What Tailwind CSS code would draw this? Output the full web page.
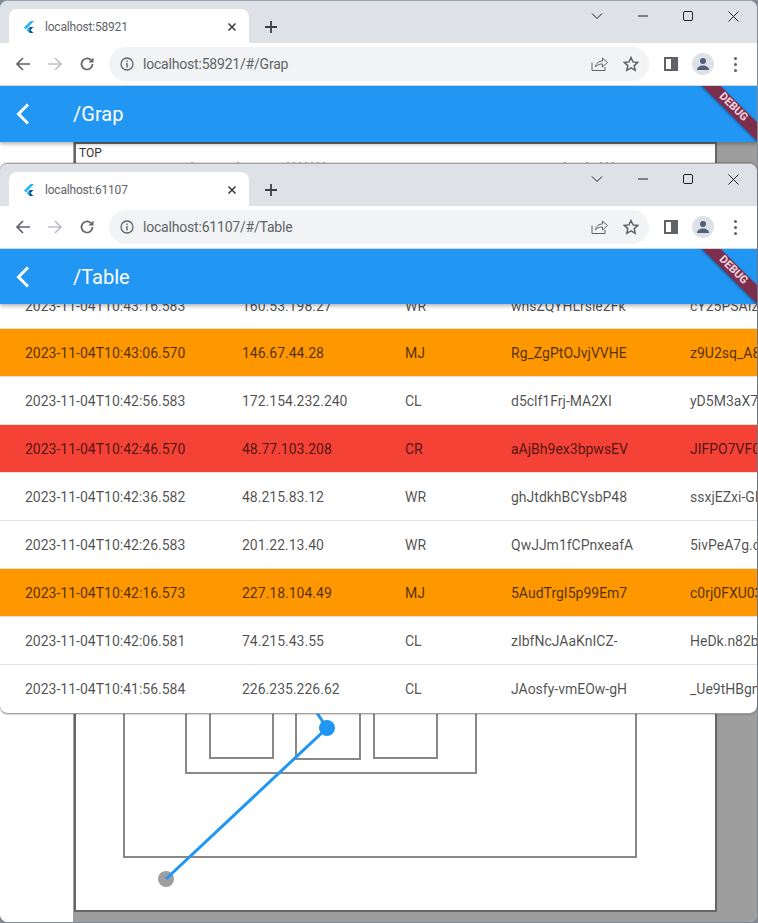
<!DOCTYPE html>
<html lang="en">
<head>
  <meta charset="UTF-8" />
  <title>/Grap</title>
  <script src="https://cdn.jsdelivr.net/npm/@tailwindcss/browser@4"></script>
</head>
<body class="w-[758px] h-[923px] overflow-hidden relative bg-[#7f8a93] font-['Roboto',sans-serif]">

  <!-- Back window -->
  <div class="absolute left-0 top-0 w-[757px] h-[922px] flex flex-col bg-white rounded-lg overflow-hidden border-t border-[#9aa8b4]">
    <div class="h-[42px] bg-[#dee1e6] flex items-end pl-[9px] relative shrink-0">
      <div class="w-[240px] h-[34px] bg-white rounded-t-lg flex items-center pl-[12px] pr-[12px] pt-px gap-[8px]">
        <svg width="16" height="16" viewBox="0 0 16 16"><path d="M9.5 2 3 8.5l2 2L13 2z" fill="#29b6f6"/><path d="M9 8l-3 3 3 3h3.5l-3-3 3-3z" fill="#01579b"/><path d="M6 11l1.500-1.500 1.500 1.500-1.500 1.500z" fill="#29b6f6"/></svg>
        <span class="text-[12px] tracking-[-0.2px] text-[#5f6368] flex-1">localhost:58921</span>
        <svg width="10" height="10" viewBox="0 0 10 10"><path d="M1.500 1.500l7 7M8.500 1.500l-7 7" stroke="#3c4043" stroke-width="1.600"/></svg>
      </div>
      <svg class="ml-[15px] mb-[9px]" width="14" height="14" viewBox="0 0 14 14"><path d="M7 1v12M1 7h12" stroke="#3c4043" stroke-width="1.800"/></svg>
      <div class="absolute right-0 top-0 flex h-[30px] items-center">
        <svg class="mr-[35px]" width="12" height="8" viewBox="0 0 12 8"><path d="M1 1.500l5 5 5-5" fill="none" stroke="#202124" stroke-width="1"/></svg>
        <svg class="mr-[35px]" width="10" height="2" viewBox="0 0 10 2"><path d="M0 1h10" stroke="#202124" stroke-width="1"/></svg>
        <div class="mr-[35px] w-[10px] h-[10px] border border-[#202124] rounded-[2px]"></div>
        <svg class="mr-[18px]" width="11" height="11" viewBox="0 0 11 11"><path d="M.5.500l10 10M10.500.500l-10 10" stroke="#202124" stroke-width="1"/></svg>
      </div>
    </div>
    <div class="h-[43px] bg-white flex items-center pl-[15px] shrink-0 border-b border-[#dadce0]">
      <svg width="16" height="16" viewBox="0 0 16 16"><path d="M15 8H2M8 2 2 8l6 6" fill="none" stroke="#5f6368" stroke-width="1.700"/></svg>
      <svg class="ml-[16px]" width="16" height="16" viewBox="0 0 16 16"><path d="M1 8h13M8 2l6 6-6 6" fill="none" stroke="#bdc1c6" stroke-width="1.700"/></svg>
      <svg class="ml-[16px]" width="16" height="16" viewBox="0 0 16 16"><path d="M13.500 8a5.500 5.500 0 1 1-1.600-3.900" fill="none" stroke="#5f6368" stroke-width="1.700"/><path d="M14.500 1.500v5h-5z" fill="#5f6368"/></svg>
      <div class="ml-[14px] w-[540px] h-[34px] rounded-full bg-[#f1f3f4] flex items-center pl-[11px] relative">
        <svg width="14" height="14" viewBox="0 0 14 14"><circle cx="7" cy="7" r="6" fill="none" stroke="#5f6368" stroke-width="1.300"/><path d="M7 6v4.500M7 3.500v1.500" stroke="#5f6368" stroke-width="1.400"/></svg>
        <span class="ml-[9px] text-[14px] tracking-[-0.2px] text-[#5f6368]">localhost:58921/#/Grap</span>
        <svg class="absolute left-[482px] top-[9px]" width="17" height="16" viewBox="0 0 17 16"><path d="M1 6.500v8h13v-3.500" fill="none" stroke="#5f6368" stroke-width="1"/><path d="M4.500 11c.5-4 3.500-6 7-6V2l5 4.500-5 4.500V8c-3 0-5.500.8-7 3z" fill="none" stroke="#5f6368" stroke-width="1"/></svg>
        <svg class="absolute left-[514px] top-[9px]" width="16" height="16" viewBox="0 0 16 16"><path d="M8 1.500l2 4.400 4.700.5-3.500 3.200 1 4.700L8 11.900l-4.200 2.400 1-4.700L1.300 6.400 6 5.900z" fill="none" stroke="#5f6368" stroke-width="1.500"/></svg>
      </div>
      <div class="ml-[15px] w-[14px] h-[14px] border-2 border-[#5f6368] border-r-[7px]"></div>
      <div class="ml-[14px] w-[22px] h-[22px] rounded-full bg-[#dee1e6] flex items-center justify-center">
        <svg width="14" height="14" viewBox="0 0 14 14"><circle cx="7" cy="4" r="3" fill="#50607a"/><path d="M1 13c0-3 3-4.500 6-4.500s6 1.500 6 4.500z" fill="#50607a"/></svg>
      </div>
      <div class="ml-[20px] flex flex-col gap-[3px]">
        <div class="w-[3px] h-[3px] rounded-full bg-[#5f6368]"></div>
        <div class="w-[3px] h-[3px] rounded-full bg-[#5f6368]"></div>
        <div class="w-[3px] h-[3px] rounded-full bg-[#5f6368]"></div>
      </div>
    </div>
    <div class="h-[56px] bg-[#2196f3] flex items-center pl-[15px] shrink-0 relative overflow-hidden shadow-[0_2px_4px_rgba(0,0,0,0.3)] z-10">
      <svg width="14" height="22" viewBox="0 0 14 22"><path d="M13 1.500 3.500 11l9.500 9.500" fill="none" stroke="white" stroke-width="3"/></svg>
      <span class="ml-[44px] text-[20px] text-white">/Grap</span>
      <div class="absolute right-[-41px] top-[15px] w-[130px] h-[13px] bg-[#7e2e4d] rotate-45 flex items-center justify-center text-[11px] font-bold text-[#f3dbe3] shadow-[0_1px_3px_rgba(0,0,0,0.4)]">DEBUG</div>
    </div>
    <!-- Graph canvas -->
    <div class="flex-1 flex relative">
      <div class="w-[73px] bg-white"></div>
      <div class="flex-1 bg-[#9e9e9e] pr-[40px] pb-[10px]">
        <div class="h-full bg-white border-2 border-[#666] ml-px relative">
          <div class="text-[12px] leading-[14px] pl-[3px] pt-[2px] text-[#333]">TOP</div>
          <div class="absolute left-[47px] top-[560px] w-[514px] h-[154px] border-2 border-[#888] border-t-0"></div>
          <div class="absolute left-[109px] top-[560px] w-[292px] h-[70px] border-2 border-[#888] border-t-0"></div>
          <div class="absolute left-[133px] top-[560px] w-[65px] h-[55px] border-2 border-[#888] border-t-0"></div>
          <div class="absolute left-[219px] top-[560px] w-[66px] h-[56px] border-2 border-[#888] border-t-0"></div>
          <div class="absolute left-[297px] top-[560px] w-[65px] h-[55px] border-2 border-[#888] border-t-0"></div>
          <svg class="absolute left-0 top-0" width="640" height="767" viewBox="0 0 640 767">
            <path d="M116 18v1M162 18v1M212 18v1M218 18v1M224 18v1M230 18v1M236 18v1M242 18v1M248 18v1M489 18v1M511 18v1M525 18v1M531 18v1M537 18v1M-21 569v1M11 569v1M46 569v1M55 569v1M62 569v1M162 569v1M187 569v1M202 569v1M208 569v1M214 569v1M220 569v1M226 569v1M244 569v1M250 569v1M256 569v1M262 569v1" stroke="#777" stroke-width="1"/>
            <circle cx="90" cy="735" r="8" fill="#9e9e9e"/>
            <path d="M90 735 251 584 239 566" fill="none" stroke="#2196f3" stroke-width="3"/>
            <circle cx="251" cy="584" r="8" fill="#2196f3"/>
          </svg>
        </div>
      </div>
    </div>
  </div>

  <!-- Front window -->
  <div class="absolute left-0 top-[163px] w-[757px] h-[551px] flex flex-col bg-white rounded-lg overflow-hidden border-t border-b border-[#a0a0a0] shadow-[0_0_2px_rgba(0,0,0,0.5)]">
    <div class="h-[42px] bg-[#dee1e6] flex items-end pl-[9px] relative shrink-0">
      <div class="w-[240px] h-[34px] bg-white rounded-t-lg flex items-center pl-[12px] pr-[12px] pt-px gap-[8px]">
        <svg width="16" height="16" viewBox="0 0 16 16"><path d="M9.5 2 3 8.5l2 2L13 2z" fill="#29b6f6"/><path d="M9 8l-3 3 3 3h3.5l-3-3 3-3z" fill="#01579b"/><path d="M6 11l1.500-1.500 1.500 1.500-1.500 1.500z" fill="#29b6f6"/></svg>
        <span class="text-[12px] tracking-[-0.2px] text-[#5f6368] flex-1">localhost:61107</span>
        <svg width="10" height="10" viewBox="0 0 10 10"><path d="M1.500 1.500l7 7M8.500 1.500l-7 7" stroke="#3c4043" stroke-width="1.600"/></svg>
      </div>
      <svg class="ml-[15px] mb-[9px]" width="14" height="14" viewBox="0 0 14 14"><path d="M7 1v12M1 7h12" stroke="#3c4043" stroke-width="1.800"/></svg>
      <div class="absolute right-0 top-0 flex h-[30px] items-center">
        <svg class="mr-[35px]" width="12" height="8" viewBox="0 0 12 8"><path d="M1 1.500l5 5 5-5" fill="none" stroke="#202124" stroke-width="1"/></svg>
        <svg class="mr-[35px]" width="10" height="2" viewBox="0 0 10 2"><path d="M0 1h10" stroke="#202124" stroke-width="1"/></svg>
        <div class="mr-[35px] w-[10px] h-[10px] border border-[#202124] rounded-[2px]"></div>
        <svg class="mr-[18px]" width="11" height="11" viewBox="0 0 11 11"><path d="M.5.500l10 10M10.500.500l-10 10" stroke="#202124" stroke-width="1"/></svg>
      </div>
    </div>
    <div class="h-[43px] bg-white flex items-center pl-[15px] shrink-0 border-b border-[#dadce0]">
      <svg width="16" height="16" viewBox="0 0 16 16"><path d="M15 8H2M8 2 2 8l6 6" fill="none" stroke="#5f6368" stroke-width="1.700"/></svg>
      <svg class="ml-[16px]" width="16" height="16" viewBox="0 0 16 16"><path d="M1 8h13M8 2l6 6-6 6" fill="none" stroke="#bdc1c6" stroke-width="1.700"/></svg>
      <svg class="ml-[16px]" width="16" height="16" viewBox="0 0 16 16"><path d="M13.500 8a5.500 5.500 0 1 1-1.600-3.900" fill="none" stroke="#5f6368" stroke-width="1.700"/><path d="M14.500 1.500v5h-5z" fill="#5f6368"/></svg>
      <div class="ml-[14px] w-[540px] h-[34px] rounded-full bg-[#f1f3f4] flex items-center pl-[11px] relative">
        <svg width="14" height="14" viewBox="0 0 14 14"><circle cx="7" cy="7" r="6" fill="none" stroke="#5f6368" stroke-width="1.300"/><path d="M7 6v4.500M7 3.500v1.500" stroke="#5f6368" stroke-width="1.400"/></svg>
        <span class="ml-[9px] text-[14px] tracking-[-0.2px] text-[#5f6368]">localhost:61107/#/Table</span>
        <svg class="absolute left-[482px] top-[9px]" width="17" height="16" viewBox="0 0 17 16"><path d="M1 6.500v8h13v-3.500" fill="none" stroke="#5f6368" stroke-width="1"/><path d="M4.500 11c.5-4 3.500-6 7-6V2l5 4.500-5 4.500V8c-3 0-5.500.8-7 3z" fill="none" stroke="#5f6368" stroke-width="1"/></svg>
        <svg class="absolute left-[514px] top-[9px]" width="16" height="16" viewBox="0 0 16 16"><path d="M8 1.500l2 4.400 4.700.5-3.500 3.200 1 4.700L8 11.900l-4.200 2.400 1-4.700L1.300 6.400 6 5.900z" fill="none" stroke="#5f6368" stroke-width="1.500"/></svg>
      </div>
      <div class="ml-[15px] w-[14px] h-[14px] border-2 border-[#5f6368] border-r-[7px]"></div>
      <div class="ml-[14px] w-[22px] h-[22px] rounded-full bg-[#dee1e6] flex items-center justify-center">
        <svg width="14" height="14" viewBox="0 0 14 14"><circle cx="7" cy="4" r="3" fill="#50607a"/><path d="M1 13c0-3 3-4.500 6-4.500s6 1.500 6 4.500z" fill="#50607a"/></svg>
      </div>
      <div class="ml-[20px] flex flex-col gap-[3px]">
        <div class="w-[3px] h-[3px] rounded-full bg-[#5f6368]"></div>
        <div class="w-[3px] h-[3px] rounded-full bg-[#5f6368]"></div>
        <div class="w-[3px] h-[3px] rounded-full bg-[#5f6368]"></div>
      </div>
    </div>
    <div class="h-[55px] bg-[#2196f3] flex items-center pl-[15px] shrink-0 relative overflow-hidden shadow-[0_2px_4px_rgba(0,0,0,0.3)] z-10">
      <svg width="14" height="22" viewBox="0 0 14 22"><path d="M13 1.500 3.500 11l9.500 9.500" fill="none" stroke="white" stroke-width="3"/></svg>
      <span class="ml-[44px] text-[20px] text-white">/Table</span>
      <div class="absolute right-[-41px] top-[15px] w-[130px] h-[13px] bg-[#7e2e4d] rotate-45 flex items-center justify-center text-[11px] font-bold text-[#f3dbe3] shadow-[0_1px_3px_rgba(0,0,0,0.4)]">DEBUG</div>
    </div>
    <!-- Table rows -->
    <div class="flex-1 overflow-hidden text-[14px] text-black/70 whitespace-nowrap">
      <div class="h-[24px] flex items-end overflow-hidden"><div class="flex h-[44px] items-center w-full shrink-0">
        <span class="w-[242px] pl-[25px] shrink-0">2023-11-04T10:43:16.583</span><span class="w-[163px] shrink-0">160.53.198.27</span><span class="w-[106px] shrink-0">WR</span><span class="w-[179px] shrink-0">whsZQYHLrsle2Fk</span><span>cY25PSAIz</span>
      </div></div>
      <div class="h-[48px] flex items-center pt-px bg-[#ff9800] border-t border-[#e0e0e0]"><span class="w-[242px] pl-[25px] shrink-0">2023-11-04T10:43:06.570</span><span class="w-[163px] shrink-0">146.67.44.28</span><span class="w-[106px] shrink-0">MJ</span><span class="w-[179px] shrink-0">Rg_ZgPtOJvjVVHE</span><span>z9U2sq_A8</span></div>
      <div class="h-[48px] flex items-center pt-px border-t border-[#e0e0e0]"><span class="w-[242px] pl-[25px] shrink-0">2023-11-04T10:42:56.583</span><span class="w-[163px] shrink-0">172.154.232.240</span><span class="w-[106px] shrink-0">CL</span><span class="w-[179px] shrink-0">d5clf1Frj-MA2XI</span><span>yD5M3aX7</span></div>
      <div class="h-[48px] flex items-center pt-px bg-[#f44336] border-t border-[#e0e0e0]"><span class="w-[242px] pl-[25px] shrink-0">2023-11-04T10:42:46.570</span><span class="w-[163px] shrink-0">48.77.103.208</span><span class="w-[106px] shrink-0">CR</span><span class="w-[179px] shrink-0">aAjBh9ex3bpwsEV</span><span>JIFPO7VF0</span></div>
      <div class="h-[48px] flex items-center pt-px border-t border-[#e0e0e0]"><span class="w-[242px] pl-[25px] shrink-0">2023-11-04T10:42:36.582</span><span class="w-[163px] shrink-0">48.215.83.12</span><span class="w-[106px] shrink-0">WR</span><span class="w-[179px] shrink-0">ghJtdkhBCYsbP48</span><span>ssxjEZxi-GI</span></div>
      <div class="h-[48px] flex items-center pt-px border-t border-[#e0e0e0]"><span class="w-[242px] pl-[25px] shrink-0">2023-11-04T10:42:26.583</span><span class="w-[163px] shrink-0">201.22.13.40</span><span class="w-[106px] shrink-0">WR</span><span class="w-[179px] shrink-0">QwJJm1fCPnxeafA</span><span>5ivPeA7g.c</span></div>
      <div class="h-[48px] flex items-center pt-px bg-[#ff9800] border-t border-[#e0e0e0]"><span class="w-[242px] pl-[25px] shrink-0">2023-11-04T10:42:16.573</span><span class="w-[163px] shrink-0">227.18.104.49</span><span class="w-[106px] shrink-0">MJ</span><span class="w-[179px] shrink-0">5AudTrgI5p99Em7</span><span>c0rj0FXU03</span></div>
      <div class="h-[48px] flex items-center pt-px border-t border-[#e0e0e0]"><span class="w-[242px] pl-[25px] shrink-0">2023-11-04T10:42:06.581</span><span class="w-[163px] shrink-0">74.215.43.55</span><span class="w-[106px] shrink-0">CL</span><span class="w-[179px] shrink-0">zIbfNcJAaKnICZ-</span><span>HeDk.n82b</span></div>
      <div class="h-[49px] flex items-center pt-px border-t border-[#e0e0e0]"><span class="w-[242px] pl-[25px] shrink-0">2023-11-04T10:41:56.584</span><span class="w-[163px] shrink-0">226.235.226.62</span><span class="w-[106px] shrink-0">CL</span><span class="w-[179px] shrink-0">JAosfy-vmEOw-gH</span><span>_Ue9tHBgn</span></div>
    </div>
  </div>

</body>
</html>
